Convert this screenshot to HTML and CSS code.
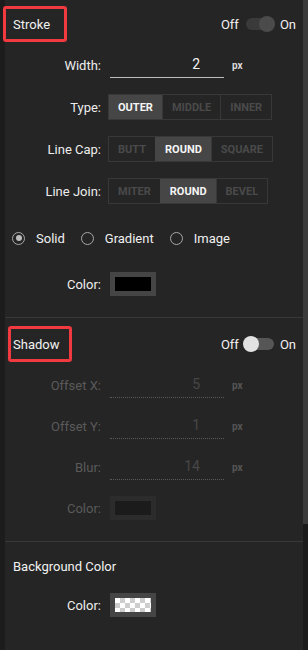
FILE: index.html
```html
<!DOCTYPE html>
<html lang="en">
<head>
  <meta charset="UTF-8" />
  <meta name="viewport" content="width=device-width, initial-scale=1.0"/>
  <title>Stroke &amp; Shadow</title>
  <link rel="stylesheet" href="styles.css">
</head>
<body>
  <div class="panel">

    <div class="section">
      <div class="section-head">
        <span class="title marked mark-stroke">Stroke</span>
        <div class="switch">
          <span>Off</span>
          <span class="track"><span class="knob knob-on"></span></span>
          <span>On</span>
        </div>
      </div>

      <div class="row">
        <label class="label">Width:</label>
        <input class="num" type="text" value="2">
        <span class="unit">px</span>
      </div>

      <div class="row">
        <label class="label">Type:</label>
        <div class="seg">
          <span class="active">Outer</span>
          <span>Middle</span>
          <span>Inner</span>
        </div>
      </div>

      <div class="row">
        <label class="label">Line Cap:</label>
        <div class="seg">
          <span>Butt</span>
          <span class="active">Round</span>
          <span>Square</span>
        </div>
      </div>

      <div class="row">
        <label class="label">Line Join:</label>
        <div class="seg">
          <span>Miter</span>
          <span class="active">Round</span>
          <span>Bevel</span>
        </div>
      </div>

      <div class="radios">
        <span class="radio checked"></span><span class="radio-text">Solid</span>
        <span class="radio"></span><span class="radio-text">Gradient</span>
        <span class="radio"></span><span class="radio-text">Image</span>
      </div>

      <div class="row row-color">
        <label class="label">Color:</label>
        <span class="swatch"><span class="fill black"></span></span>
      </div>
    </div>

    <div class="section">
      <div class="section-head">
        <span class="title marked mark-shadow">Shadow</span>
        <div class="switch">
          <span>Off</span>
          <span class="track light"><span class="knob knob-off"></span></span>
          <span>On</span>
        </div>
      </div>

      <div class="row off">
        <label class="label">Offset X:</label>
        <input class="num" type="text" value="5" disabled>
        <span class="unit">px</span>
      </div>

      <div class="row off">
        <label class="label">Offset Y:</label>
        <input class="num" type="text" value="1" disabled>
        <span class="unit">px</span>
      </div>

      <div class="row off">
        <label class="label">Blur:</label>
        <input class="num" type="text" value="14" disabled>
        <span class="unit">px</span>
      </div>

      <div class="row off">
        <label class="label">Color:</label>
        <span class="swatch"><span class="fill dark"></span></span>
      </div>
    </div>

    <div class="section last">
      <div class="section-head plain">
        <span class="title">Background Color</span>
      </div>

      <div class="row">
        <label class="label">Color:</label>
        <span class="swatch"><span class="fill checker"></span></span>
      </div>
    </div>

  </div>

  <div class="scrollbar"><div class="thumb"></div></div>
</body>
</html>
```

FILE: styles.css
```css
body {
  margin: 0;
  height: 650px;
  overflow: hidden;
  background-color: #1c1c1c;
  color: #e8e8e8;
  font-family: Roboto, "Liberation Sans", sans-serif;
  font-size: 13px;
  display: flex;
  padding-left: 5px;
}

.panel {
  width: 298px;
  background-color: #252525;
}

.scrollbar {
  width: 5px;
  background-color: #1b1b1b;
}

.thumb {
  height: 524px;
  background-color: #3b3b3b;
}

.section {
  border-top: 1px solid #383838;
  padding: 2px 0 21px;
}

.section:first-child {
  border-top: none;
  padding-top: 0;
}

.section.last {
  padding-bottom: 40px;
}

.section-head {
  height: 48px;
  display: flex;
  align-items: center;
  justify-content: space-between;
  padding: 0 7px 0 8px;
}

.section-head.plain {
  height: 44px;
}

.title {
  font-weight: 400;
  color: #f2f2f2;
}

.marked {
  border: 3px solid #f03a3f;
  border-radius: 3px;
  height: 30px;
  display: flex;
  align-items: center;
}

.mark-stroke {
  margin-left: -10px;
  padding: 0 14px 0 7px;
}

.mark-shadow {
  margin-left: -5px;
  padding: 0 10px 0 2px;
}

.switch {
  display: flex;
  align-items: center;
  gap: 7px;
  font-size: 13px;
  color: #f0f0f0;
}

.track {
  position: relative;
  width: 28px;
  height: 12px;
  border-radius: 6px;
  background-color: #3a3a3a;
  margin-right: -1px;
}

.track.light {
  background-color: #565656;
}

.knob {
  position: absolute;
  top: -2px;
  width: 16px;
  height: 16px;
  border-radius: 50%;
}

.knob-on {
  right: -1px;
  background-color: #4b4b4b;
}

.knob-off {
  left: -3px;
  background-color: #e2e2e2;
}

.row {
  display: flex;
  align-items: center;
  gap: 7px;
  margin-top: 16px;
}

.section-head + .row {
  margin-top: 5px;
}

.label {
  width: 96px;
  text-align: right;
  color: #ededed;
}

.num {
  width: 114px;
  height: 25px;
  box-sizing: border-box;
  margin: 0 0 0 2px;
  padding: 0 24px 2px 0;
  border: none;
  border-bottom: 1px solid #bdbdbd;
  background: transparent;
  color: #f2f2f2;
  font-family: Roboto, "Liberation Sans", sans-serif;
  font-size: 14px;
  text-align: right;
}

.unit {
  margin-left: 1px;
  font-size: 10px;
  font-weight: bold;
  color: #d8d8d8;
}

.seg {
  display: flex;
  height: 26px;
  border: 1px solid #383838;
  box-sizing: border-box;
}

.seg span {
  display: flex;
  align-items: center;
  padding: 0 9px;
  font-size: 11px;
  font-weight: bold;
  text-transform: uppercase;
  color: #4a4a4a;
  border-left: 1px solid #383838;
}

.seg span:first-child {
  border-left: none;
}

.seg span.active {
  background-color: #464646;
  color: #f5f5f5;
  border-left-color: #464646;
}

.radios {
  display: flex;
  align-items: center;
  height: 26px;
  margin-top: 21px;
  padding-left: 7px;
}

.radio {
  width: 13px;
  height: 13px;
  box-sizing: border-box;
  border: 1.5px solid #a8a8a8;
  border-radius: 50%;
  display: flex;
  align-items: center;
  justify-content: center;
}

.radio.checked::after {
  content: "";
  width: 6px;
  height: 6px;
  border-radius: 50%;
  background-color: #bdbdbd;
}

.radio-text {
  margin: 0 16px 0 11px;
  font-size: 13px;
  color: #f0f0f0;
}

.row-color {
  margin-top: 21px;
}

.swatch {
  margin-left: 2px;
  width: 46px;
  height: 24px;
  box-sizing: border-box;
  padding: 5px;
  background-color: #454545;
}

.fill {
  display: block;
  width: 100%;
  height: 100%;
}

.fill.black {
  background-color: #000;
}

.fill.dark {
  background-color: #1b1b1b;
}

.fill.checker {
  background-color: #fff;
  background-image:
    linear-gradient(45deg, #cdcdcd 25%, transparent 25%, transparent 75%, #cdcdcd 75%),
    linear-gradient(45deg, #cdcdcd 25%, transparent 25%, transparent 75%, #cdcdcd 75%);
  background-size: 10px 10px;
  background-position: 0 0, 5px 5px;
}

.row.off .label {
  color: #5a5a5a;
}

.row.off .num {
  color: #474747;
  border-bottom: 1px dotted #5a5a5a;
}

.row.off .unit {
  color: #555;
}

.row.off .swatch {
  background-color: #2c2c2c;
}
```
